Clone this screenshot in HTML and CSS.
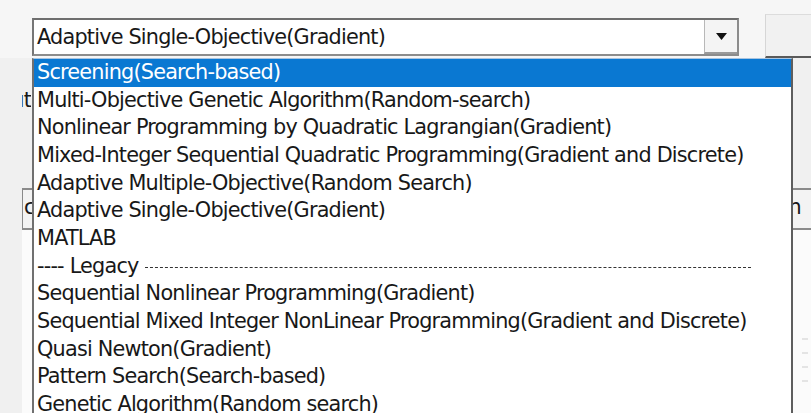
FILE: index.html
```html
<!DOCTYPE html>
<html lang="en">
<head>
<meta charset="utf-8">
<title>Optimization Method</title>
<link rel="stylesheet" href="styles.css">
</head>
<body>
<div class="screen">
  <div class="toolbar">
    <div class="combo">
      <span class="combo-value">Adaptive Single-Objective(Gradient)</span>
      <span class="combo-btn">
        <svg width="11" height="7" viewBox="0 0 11 7"><path d="M0 0H11L5.5 7Z" fill="#111"/></svg>
      </span>
    </div>
    <div class="side-btn"></div>
  </div>

  <div class="panel">
    <div class="form-row"><span class="label">Output</span></div>
    <div class="grid-row">
      <span class="cell cell-first"><span class="clip">criteria</span></span>
      <span class="cell cell-last">Column</span>
    </div>
    <div class="grid-body">
      <span class="tick"></span><span class="tick"></span><span class="tick"></span><span class="tick"></span>
    </div>
  </div>

  <ul class="dropdown">
    <li class="item selected">Screening(Search-based)</li>
    <li class="item">Multi-Objective Genetic Algorithm(Random-search)</li>
    <li class="item">Nonlinear Programming by Quadratic Lagrangian(Gradient)</li>
    <li class="item">Mixed-Integer Sequential Quadratic Programming(Gradient and Discrete)</li>
    <li class="item">Adaptive Multiple-Objective(Random Search)</li>
    <li class="item">Adaptive Single-Objective(Gradient)</li>
    <li class="item">MATLAB</li>
    <li class="item separator"><span>---- Legacy</span><span class="rule"></span></li>
    <li class="item">Sequential Nonlinear Programming(Gradient)</li>
    <li class="item">Sequential Mixed Integer NonLinear Programming(Gradient and Discrete)</li>
    <li class="item">Quasi Newton(Gradient)</li>
    <li class="item">Pattern Search(Search-based)</li>
    <li class="item">Genetic Algorithm(Random search)</li>
  </ul>
</div>
</body>
</html>
```

FILE: styles.css
```css
* {
  box-sizing: border-box;
}

html, body {
  margin: 0;
  padding: 0;
}

body {
  width: 811px;
  height: 413px;
  overflow: hidden;
  background: #f6f6f6;
  font-family: "DejaVu Sans", Tahoma, sans-serif;
  font-size: 20.8px;
  letter-spacing: -0.8px;
  color: #181818;
}

.screen {
  position: relative;
  width: 811px;
  height: 413px;
  overflow: hidden;
}

/* top row: combo box and the neighbouring button */
.toolbar {
  display: flex;
  align-items: flex-start;
  padding: 18px 0 0 32px;
  gap: 26px;
  height: 58px;
}

.combo {
  display: flex;
  align-items: stretch;
  width: 707px;
  height: 38px;
  background: #fff;
  border: 2px solid #8c8c8c;
  border-top-color: #6e6e6e;
  border-left-color: #767676;
}

.combo-value {
  flex: 1;
  display: flex;
  align-items: center;
  padding-left: 3px;
  padding-bottom: 1px;
}

.combo-btn {
  width: 33px;
  display: flex;
  align-items: center;
  justify-content: center;
  background: #f4f4f4;
  border-left: 1px solid #b8b8b8;
  border-bottom: 2px solid #9a9a9a;
}

.side-btn {
  flex: 1;
  height: 44px;
  margin-top: -4px;
  background: #f1f1f1;
  border-top: 1px solid #dcdcdc;
  border-left: 1px solid #d6d6d6;
  border-bottom: 2px solid #5a5a5a;
}

/* content that sits behind the open list */
.panel {
  display: flex;
  flex-direction: column;
  padding-left: 22px;
  background: #f0f0f0;
}

.form-row {
  height: 130px;
  display: flex;
  padding-top: 31px;
}

.label {
  width: 9px;
  overflow: hidden;
  display: flex;
  justify-content: flex-end;
  white-space: nowrap;
  line-height: 22px;
}

.grid-row {
  display: flex;
  justify-content: space-between;
  height: 42px;
  border-top: 2px solid #8a8a8a;
  border-bottom: 2px solid #8a8a8a;
  border-left: 1px solid #8a8a8a;
  background: #f3f3f3;
}

.cell {
  display: flex;
  align-items: center;
  white-space: nowrap;
  padding-bottom: 4px;
}

.cell-first {
  padding-left: 1px;
}

.clip {
  width: 8px;
  overflow: hidden;
}

.cell-last {
  padding-right: 10px;
}

.grid-body {
  height: 200px;
  background: #fbfbfb;
  display: flex;
  flex-direction: column;
  align-items: flex-end;
  gap: 12px;
  padding: 108px 3px 0 0;
}

.tick {
  width: 6px;
  height: 2px;
  background: #e4e4e4;
}

/* open drop-down list */
.dropdown {
  position: absolute;
  left: 32px;
  top: 58px;
  width: 761px;
  height: 380px;
  margin: 0;
  padding: 0;
  list-style: none;
  background: #fff;
  border-top: 1px solid #a8c4e0;
  border-left: 2px solid #707070;
  border-right: 2px solid #5e5e5e;
}

.item {
  height: 27.67px;
  line-height: 27.67px;
  padding-left: 3px;
  white-space: nowrap;
}

.item.selected {
  background: #0a78d2;
  color: #fff;
}

.separator {
  display: flex;
  align-items: center;
  gap: 6px;
}

.rule {
  width: 606px;
  height: 0;
  margin-top: 3px;
  border-top: 1px dashed #333;
}
```
